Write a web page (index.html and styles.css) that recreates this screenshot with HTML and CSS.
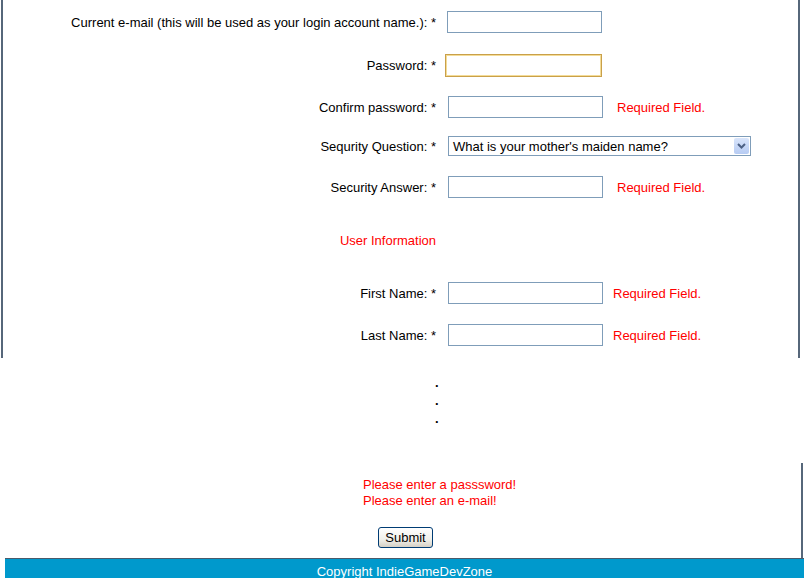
FILE: index.html
```html
<!DOCTYPE html>
<html>
<head>
<meta charset="utf-8">
<title>Register</title>
<link rel="stylesheet" href="styles.css">
</head>
<body>
<div class="page">
  <div class="panel">
    <div class="row r1">
      <label class="lbl">Current e-mail (this will be used as your login account name.): *</label>
      <input class="field" type="text">
    </div>
    <div class="row r2">
      <label class="lbl">Password: *</label>
      <input class="field focused" type="password">
    </div>
    <div class="row r3">
      <label class="lbl">Confirm password: *</label>
      <input class="field" type="password">
      <span class="req">Required Field.</span>
    </div>
    <div class="row r4">
      <label class="lbl">Sequrity Question: *</label>
      <div class="select">
        <span class="select-text">What is your mother's maiden name?</span>
        <span class="select-btn">
          <svg width="15" height="16" viewBox="0 0 15 16"><path d="M4 6 L7.5 9.5 L11 6" fill="none" stroke="#4d6185" stroke-width="2"/></svg>
        </span>
      </div>
    </div>
    <div class="row r5">
      <label class="lbl">Security Answer: *</label>
      <input class="field" type="text">
      <span class="req">Required Field.</span>
    </div>
    <div class="row r6">
      <span class="lbl section">User Information</span>
    </div>
    <div class="row r7">
      <label class="lbl">First Name: *</label>
      <input class="field" type="text">
      <span class="req">Required Field.</span>
    </div>
    <div class="row r8">
      <label class="lbl">Last Name: *</label>
      <input class="field" type="text">
      <span class="req">Required Field.</span>
    </div>
  </div>
  <div class="omit">
    <div>.</div>
    <div>.</div>
    <div>.</div>
  </div>
  <div class="lower">
    <div class="errors">
      <div>Please enter a passsword!</div>
      <div>Please enter an e-mail!</div>
    </div>
    <div class="actions">
      <button class="submit" type="button">Submit</button>
    </div>
  </div>
  <div class="footer">Copyright IndieGameDevZone</div>
</div>
</body>
</html>
```
FILE: styles.css
```css
html, body {
  margin: 0;
  padding: 0;
  background: #ffffff;
}
body {
  font-family: "Liberation Sans", Arial, sans-serif;
  font-size: 13px;
  color: #000;
  overflow: hidden;
}
.page {
  width: 804px;
}
.panel {
  margin-left: 1px;
  width: 799px;
  border-left: 2px solid #56677a;
  border-right: 2px solid #56677a;
  height: 358px;
  box-sizing: border-box;
  padding-top: 1px;
}
.row {
  display: grid;
  grid-template-columns: 433px 155px auto;
  column-gap: 11px;
  align-items: center;
}
.r1 { height: 42px; }
.r2 { height: 44px; }
.r3 { height: 40px; }
.r4 { height: 38px; }
.r5 { height: 44px; }
.r6 { height: 62px; }
.r7 { height: 44px; }
.r8 { height: 40px; }
.lbl {
  text-align: right;
  white-space: nowrap;
}
.section {
  color: #ff0000;
}
.field {
  box-sizing: border-box;
  width: 155px;
  height: 22px;
  border: 1px solid #7f9db9;
  margin: 0;
  padding: 0 2px;
  font: inherit;
  background: #fff;
}
.focused {
  width: 157px;
  height: 23px;
  margin-left: -2px;
  border: 1px solid #c9a04a;
  box-shadow: 0 0 0 1px #f4dc97 inset;
}
.r3 .field, .r5 .field, .r7 .field, .r8 .field, .r4 .select { margin-left: 1px; }
.req {
  color: #ff0000;
  margin-left: 4px;
  white-space: nowrap;
}
.r7 .req, .r8 .req { margin-left: 0; }
.select {
  grid-column: 2 / span 2;
  box-sizing: border-box;
  width: 303px;
  height: 20px;
  border: 1px solid #7f9db9;
  display: flex;
  align-items: center;
  justify-content: space-between;
  background: #fff;
}
.select-text {
  padding-left: 4px;
  white-space: nowrap;
}
.select-btn {
  width: 15px;
  height: 16px;
  margin-right: 1px;
  background: linear-gradient(#d9e5fb, #b6cbf3);
  border-radius: 2px;
  display: flex;
}
.omit {
  height: 105px;
  box-sizing: border-box;
  padding-top: 16px;
  padding-left: 435px;
  line-height: 18px;
  font-weight: bold;
}
.lower {
  width: 803px;
  border-right: 2px solid #56677a;
  height: 95px;
  box-sizing: border-box;
  padding-top: 14px;
}
.errors {
  padding-left: 363px;
  color: #ff0000;
  line-height: 16px;
}
.actions {
  padding-left: 378px;
  padding-top: 18px;
}
.submit {
  box-sizing: border-box;
  width: 55px;
  height: 21px;
  border: 1px solid #003c74;
  border-radius: 3px;
  background: linear-gradient(#ffffff, #f0f0ea 60%, #d6d0c5);
  font: inherit;
  font-size: 13px;
  padding: 0;
  color: #000;
}
.footer {
  margin-left: 5px;
  background: #0099cc;
  border-top: 1px solid #4b5b6b;
  height: 40px;
  color: #ffffff;
  text-align: center;
  padding-top: 5px;
  line-height: 16px;
}
```
